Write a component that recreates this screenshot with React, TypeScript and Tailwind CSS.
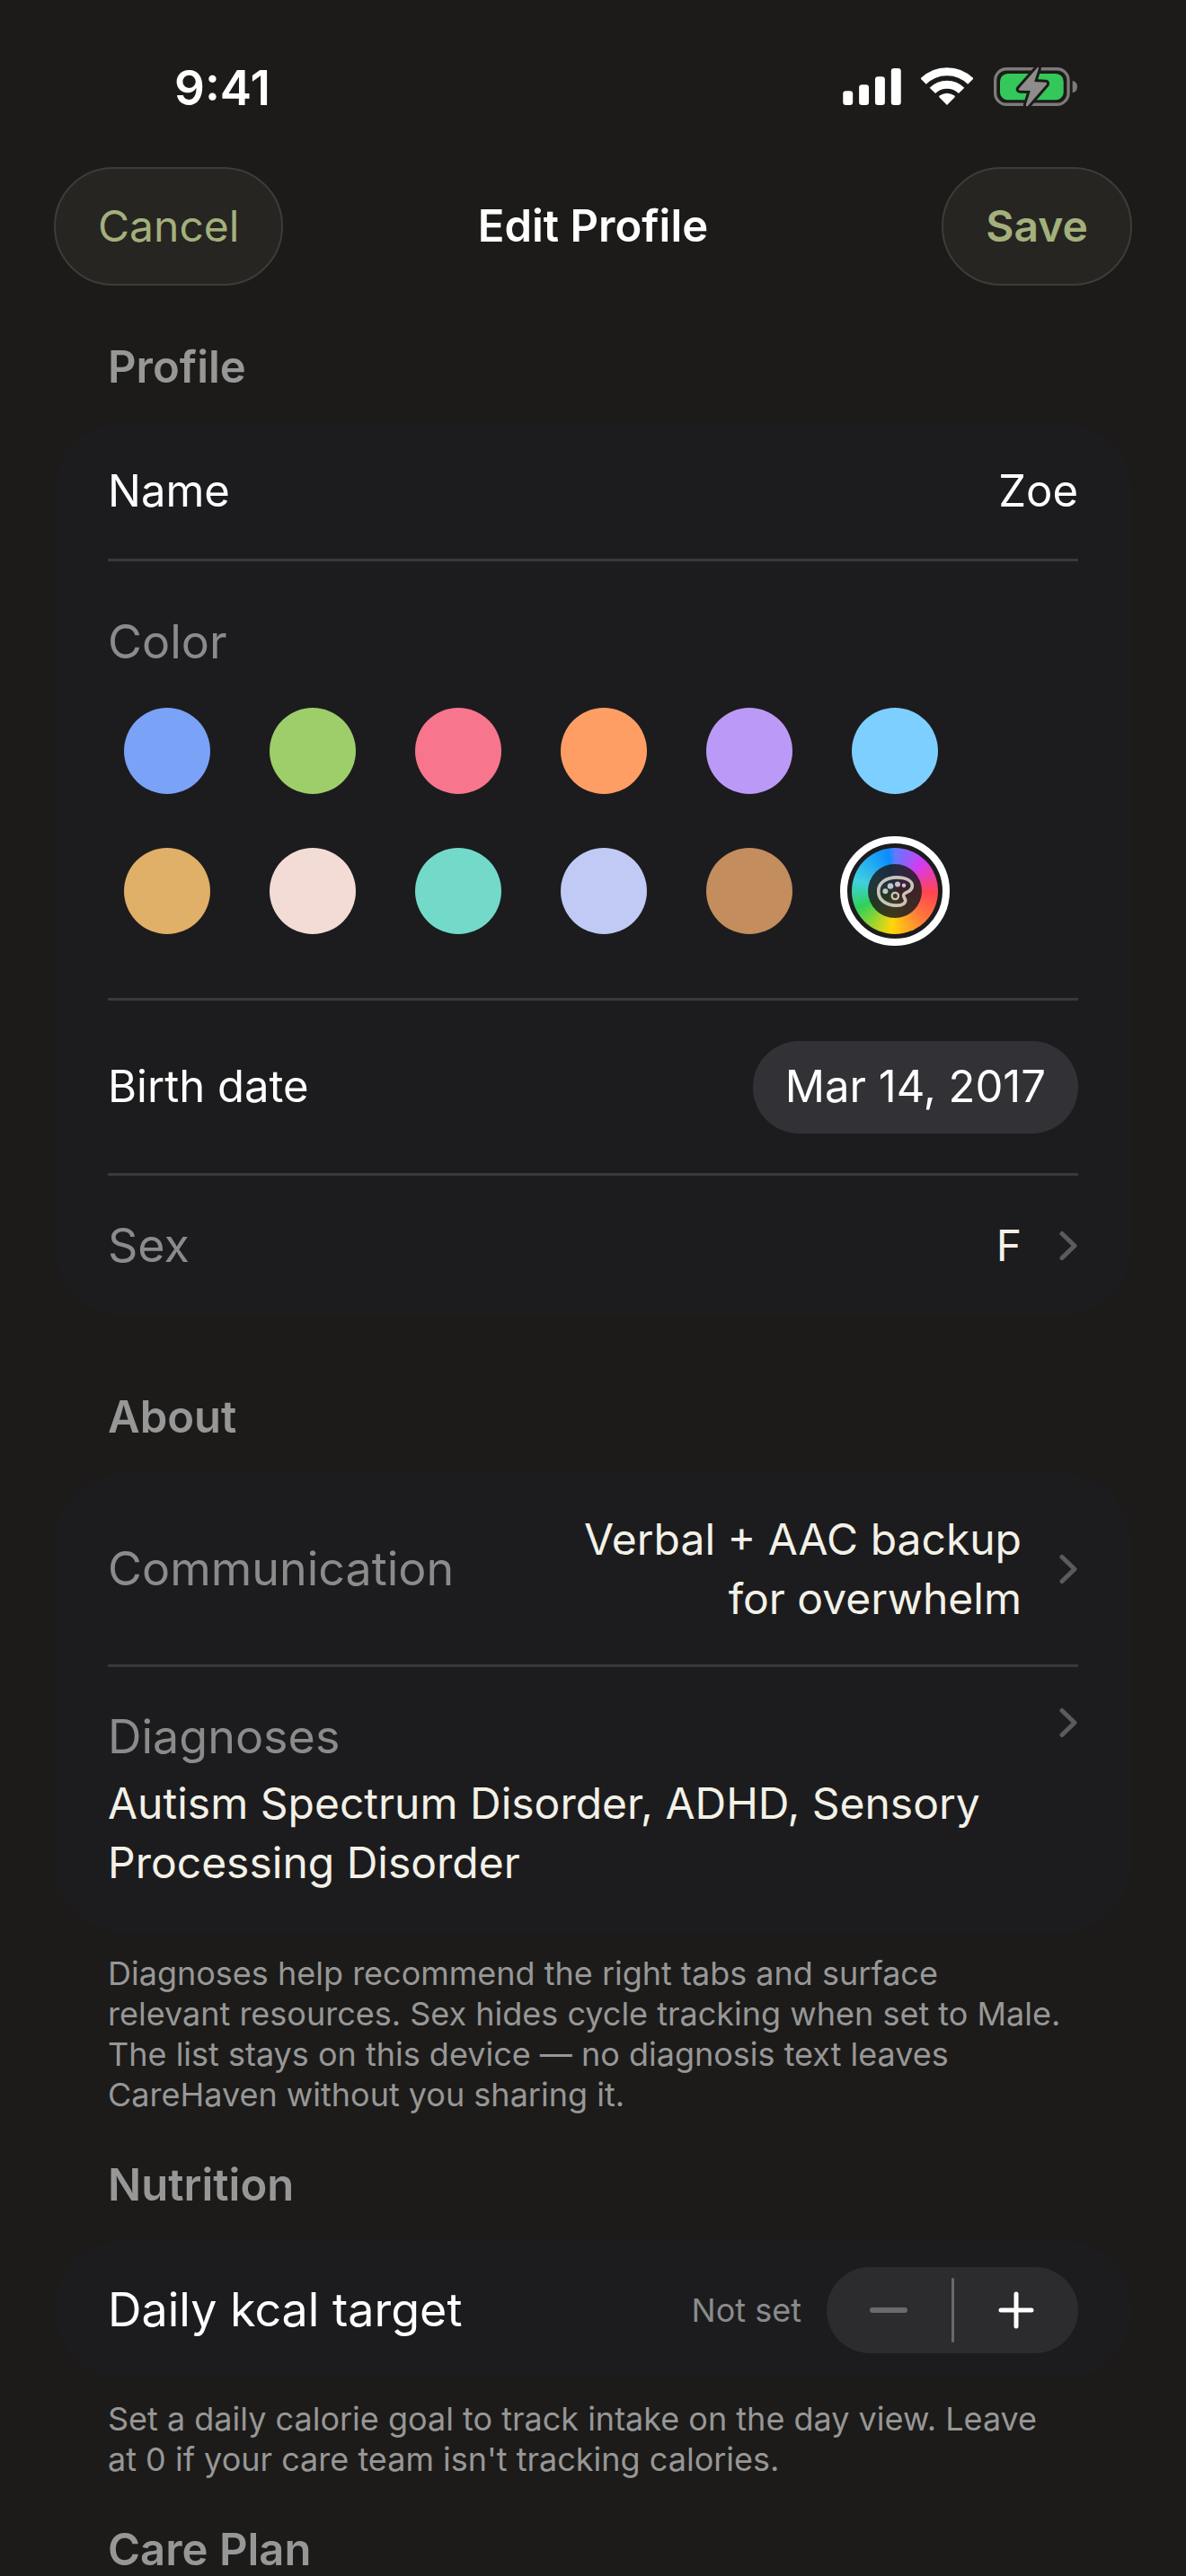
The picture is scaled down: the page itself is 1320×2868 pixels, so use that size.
import { useState } from "react"
import type { ReactNode } from "react"

const swatches = [
  { name: "Blue", bg: "bg-[#7aa2f7]" },
  { name: "Green", bg: "bg-[#9ece6a]" },
  { name: "Pink", bg: "bg-[#f7768e]" },
  { name: "Orange", bg: "bg-[#ff9e64]" },
  { name: "Purple", bg: "bg-[#bb9af7]" },
  { name: "Sky", bg: "bg-[#7dcfff]" },
  { name: "Gold", bg: "bg-[#e0af68]" },
  { name: "Blush", bg: "bg-[#f2dcd5]" },
  { name: "Teal", bg: "bg-[#73daca]" },
  { name: "Lavender", bg: "bg-[#c0caf5]" },
  { name: "Brown", bg: "bg-[#c38d5d]" },
]

function StatusBar() {
  return (
    <div className="flex h-[186px] items-center justify-between pt-2.5 pr-[120px] pl-[194px]">
      <span className="text-[53px] leading-[66px] font-semibold">9:41</span>
      <div className="flex items-center gap-[22px] pb-1">
        <svg width="65" height="41" viewBox="111 77 195 124" fill="#fff" aria-hidden="true">
          <rect x="111" y="153" width="33" height="48" rx="10" />
          <rect x="165" y="132" width="33" height="69" rx="10" />
          <rect x="219" y="105" width="33" height="96" rx="10" />
          <rect x="273" y="77" width="33" height="124" rx="10" />
        </svg>
        <svg width="58" height="42" viewBox="374 75 174 126" fill="none" stroke="#fff" strokeWidth="27" aria-hidden="true">
          <path d="M381.8 121.8A112 112 0 0 1 540.2 121.8" />
          <path d="M412.6 152.6A68.5 68.5 0 0 1 509.4 152.6" />
          <path d="M461 201L435 175Q433 171 437 169Q461 153 485 169Q489 171 487 175Z" fill="#fff" stroke="none" />
        </svg>
        <svg width="95" height="47" viewBox="612 69 286 141" aria-hidden="true">
          <rect x="620" y="80" width="245" height="119" rx="38" fill="none" stroke="#7d7b7a" strokeWidth="10" />
          <rect x="636" y="96" width="213" height="88" rx="26" fill="#34c759" />
          <path d="M879 119Q895 124 895 140Q895 156 879 160Z" fill="#7d7b7a" />
          <path
            d="M762 75L699 146Q697 151 702 152L738 153L723 200Q722 208 729 204L792 132Q795 126 789 125L751 123L765 79Q766 72 762 75Z"
            fill="#8f8d8b"
            stroke="#1c1b19"
            strokeWidth="18"
            strokeLinejoin="round"
            paintOrder="stroke"
          />
        </svg>
      </div>
    </div>
  )
}

function Chevron() {
  return (
    <svg className="shrink-0" width="21" height="34" viewBox="0 0 21 34" fill="none" aria-hidden="true">
      <path d="M3 3.5L17 17L3 30.5" stroke="#5b5b5e" strokeWidth="5" strokeLinecap="round" strokeLinejoin="round" />
    </svg>
  )
}

function PaletteIcon() {
  return (
    <svg width="41" height="35" viewBox="228 644 123 104" fill="none" stroke="#c9c4bb" aria-hidden="true">
      <path
        d="M233 695C233 668 258 649 294 649C326 649 346 661 346 677C346 692 333 696 322 702C312 708 318 714 322 722C327 734 314 743 294 743C258 743 233 724 233 695Z"
        strokeWidth="11"
      />
      <circle cx="289" cy="711" r="11" strokeWidth="7" />
      <g fill="#c9c4bb" stroke="none">
        <circle cx="256" cy="695" r="9" />
        <circle cx="273" cy="678" r="10" />
        <circle cx="297" cy="672" r="9" />
        <circle cx="318" cy="676" r="7" />
      </g>
    </svg>
  )
}

function SectionTitle({ children }: { children: ReactNode }) {
  return <h2 className="px-[60px] text-[49px] leading-[54px] font-semibold text-[#979797]">{children}</h2>
}

function Card({ children }: { children: ReactNode }) {
  return <div className="mt-[35px] rounded-[78px] bg-[#1c1c1e] px-[60px]">{children}</div>
}

function Footnote({ children }: { children: ReactNode }) {
  return <p className="mt-[23px] px-[60px] text-[36px] leading-[45px] text-[#979797]">{children}</p>
}

export default function App() {
  const [color, setColor] = useState("Custom")
  const [kcal, setKcal] = useState(0)

  return (
    <div className="min-h-screen bg-[#1c1b19] font-['Inter',sans-serif] text-[49px] leading-[66px] text-white">
      <StatusBar />

      <header className="grid grid-cols-[1fr_auto_1fr] items-center px-[60px]">
        <button
          type="button"
          className="h-[132px] justify-self-start rounded-full border-2 border-[#3d3c38] bg-[#262521] px-[47px] text-[48px] text-[#a3b07c]"
        >
          Cancel
        </button>
        <h1 className="font-semibold">Edit Profile</h1>
        <button
          type="button"
          className="h-[132px] justify-self-end rounded-full border-2 border-[#3d3c38] bg-[#262521] px-[47px] text-[48px] font-semibold text-[#a3b07c]"
        >
          Save
        </button>
      </header>

      <main className="px-[60px]">
        <section className="mt-16">
          <SectionTitle>Profile</SectionTitle>
          <Card>
            <div className="flex h-[154px] items-center justify-between border-b-3 border-[#39393b]">
              <label htmlFor="name">Name</label>
              <input id="name" type="text" defaultValue="Zoe" className="min-w-0 flex-1 bg-transparent text-right outline-none" />
            </div>

            <div className="border-b-3 border-[#39393b] pt-[57px] pb-[71px]">
              <div id="color-label" className="text-[52px] text-[#8b8b8c]">
                Color
              </div>
              <div
                role="radiogroup"
                aria-labelledby="color-label"
                className="mt-10 grid grid-cols-[repeat(6,96px)] gap-x-[66px] gap-y-[60px] pl-[18px]"
              >
                {swatches.map((s) => (
                  <input
                    key={s.name}
                    type="radio"
                    name="color"
                    aria-label={s.name}
                    checked={color === s.name}
                    onChange={() => setColor(s.name)}
                    className={`size-24 cursor-pointer appearance-none rounded-full outline-offset-5 checked:outline-8 checked:outline-white ${s.bg}`}
                  />
                ))}
                <label className="flex size-24 cursor-pointer items-center justify-center rounded-full bg-[conic-gradient(#5e7bff,#d63af0_45deg,#ff4550_92deg,#ff7a3c_135deg,#ffd60a_185deg,#30d158_245deg,#40d0e0_285deg,#0a8cff_350deg,#5e7bff)] outline-offset-5 has-checked:outline-8 has-checked:outline-white">
                  <input
                    type="radio"
                    name="color"
                    aria-label="Custom color"
                    checked={color === "Custom"}
                    onChange={() => setColor("Custom")}
                    className="sr-only"
                  />
                  <span className="flex size-15 items-center justify-center rounded-full bg-[#1c1c1e]/85">
                    <PaletteIcon />
                  </span>
                </label>
              </div>
            </div>

            <div className="flex h-[195px] items-center justify-between border-b-3 border-[#39393b]">
              <span id="birth-label">Birth date</span>
              <button type="button" aria-labelledby="birth-label birth-value" className="h-[103px] rounded-full bg-[#323236] px-9">
                <span id="birth-value">Mar 14, 2017</span>
              </button>
            </div>

            <button type="button" className="flex h-[156px] w-full items-center text-left">
              <span className="flex-1 text-[52px] text-[#8b8b8c]">Sex</span>
              <span className="mr-[42px] text-[48px] text-[#f3f1e7]">F</span>
              <Chevron />
            </button>
          </Card>
        </section>

        <section className="mt-[86px]">
          <SectionTitle>About</SectionTitle>
          <Card>
            <button type="button" className="flex h-[216px] w-full items-center justify-between border-b-3 border-[#39393b] text-left">
              <span className="text-[52px] text-[#8b8b8c]">Communication</span>
              <span className="mr-[42px] ml-auto w-[520px] text-right text-[48px] text-[#f3f1e7]">Verbal + AAC backup for overwhelm</span>
              <Chevron />
            </button>

            <button type="button" className="flex w-full items-start pt-[45px] pb-[45px] text-left">
              <span className="flex-1">
                <span className="block text-[52px] text-[#8b8b8c]">Diagnoses</span>
                <span className="mt-2 block text-[48px] text-[#f3f1e7]">Autism Spectrum Disorder, ADHD, Sensory Processing Disorder</span>
              </span>
              <Chevron />
            </button>
          </Card>
          <Footnote>
            Diagnoses help recommend the right tabs and surface
            <br />
            relevant resources. Sex hides cycle tracking when set to Male.
            <br />
            The list stays on this device — no diagnosis text leaves
            <br />
            CareHaven without you sharing it.
          </Footnote>
        </section>

        <section className="mt-[51px]">
          <SectionTitle>Nutrition</SectionTitle>
          <Card>
            <div className="flex h-[153px] items-center">
              <span className="flex-1 text-[52px]">Daily kcal target</span>
              <output className="mr-7 text-[36px] text-[#8b8b8c]">{kcal === 0 ? "Not set" : kcal}</output>
              <div className="flex h-24 w-[280px] items-center rounded-full bg-[#2c2c2e]">
                <button
                  type="button"
                  aria-label="Decrease"
                  disabled={kcal === 0}
                  onClick={() => setKcal(kcal - 50)}
                  className="flex h-full flex-1 items-center justify-center text-white disabled:text-[#6a6a6c]"
                >
                  <svg width="42" height="42" viewBox="0 0 42 42" fill="none" stroke="currentColor" strokeWidth="6" strokeLinecap="round" aria-hidden="true">
                    <path d="M3 21H39" />
                  </svg>
                </button>
                <span className="h-[72px] w-[3px] rounded-full bg-[#69696b]" />
                <button
                  type="button"
                  aria-label="Increase"
                  onClick={() => setKcal(kcal + 50)}
                  className="flex h-full flex-1 items-center justify-center text-white"
                >
                  <svg width="42" height="42" viewBox="0 0 42 42" fill="none" stroke="currentColor" strokeWidth="5" strokeLinecap="round" aria-hidden="true">
                    <path d="M4 21H38M21 3V39" />
                  </svg>
                </button>
              </div>
            </div>
          </Card>
          <Footnote>
            Set a daily calorie goal to track intake on the day view. Leave
            <br />
            at 0 if your care team isn't tracking calories.
          </Footnote>
        </section>

        <section className="mt-[51px]">
          <SectionTitle>Care Plan</SectionTitle>
        </section>
      </main>
    </div>
  )
}
